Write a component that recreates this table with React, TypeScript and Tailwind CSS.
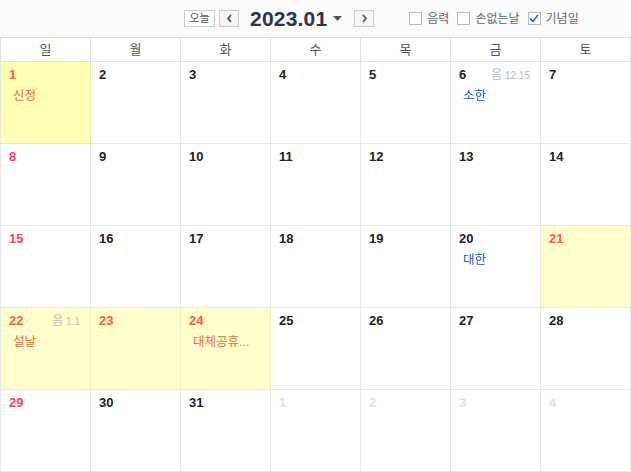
import React from 'react';

type Cell = {
  day: number;
  other?: boolean;
  red?: boolean;
  yellow?: boolean;
  today?: boolean;
  lunar?: string;
  label?: string;
  labelColor?: string;
};

const weekNames = ['일', '월', '화', '수', '목', '금', '토'];

function buildCells(): Cell[] {
  const cells: Cell[] = [];
  for (let d = 1; d <= 31; d++) cells.push({ day: d, red: (d - 1) % 7 === 0 });
  for (let d = 1; d <= 4; d++) cells.push({ day: d, other: true });
  cells[0] = { ...cells[0], red: true, yellow: true, today: true, label: '신정', labelColor: 'text-[#f26b3a]' };
  cells[5] = { ...cells[5], lunar: '12.15', label: '소한', labelColor: 'text-[#2250c8]' };
  cells[19] = { ...cells[19], label: '대한', labelColor: 'text-[#2250c8]' };
  cells[20] = { ...cells[20], red: true, yellow: true };
  cells[21] = { ...cells[21], yellow: true, lunar: '1.1', label: '설날', labelColor: 'text-[#f26b3a]' };
  cells[22] = { ...cells[22], red: true, yellow: true };
  cells[23] = { ...cells[23], red: true, yellow: true, label: '대체공휴...', labelColor: 'text-[#f26b3a]' };
  return cells;
}

function CheckBox({ checked, label }: { checked?: boolean; label: string }) {
  return (
    <label className="flex items-center gap-[5px] text-[12px] text-[#666]">
      <span className="flex h-[13px] w-[13px] items-center justify-center border border-[#bbb] bg-white">
        {checked && (
          <svg width="10" height="9" viewBox="0 0 10 9">
            <path d="M1 4.5 L4 7.5 L9 1" fill="none" stroke="#3b6fc4" strokeWidth="1.8" />
          </svg>
        )}
      </span>
      {label}
    </label>
  );
}

export default function App() {
  const cells = buildCells();

  return (
    <div className="h-[472px] w-[631px] overflow-hidden bg-white font-['Liberation_Sans','Noto_Sans_CJK_KR',sans-serif]">
      {/* Toolbar */}
      <div className="flex h-[38px] items-center border-b border-[#dcdcdc] bg-[#fafafa]">
        <div className="ml-[184px] flex items-center">
          <button className="h-[17px] w-[31px] border border-[#ccc] bg-white text-[11px] leading-[15px] text-[#555]">오늘</button>
          <button className="ml-[4px] flex h-[17px] w-[20px] items-center justify-center border border-[#ccc] bg-[#f5f5f5]">
            <svg width="7" height="9" viewBox="0 0 7 9">
              <path d="M5 1 L2 4.5 L5 8" fill="none" stroke="#555" strokeWidth="1.8" />
            </svg>
          </button>
          <span className="ml-[11px] text-[21px] font-bold tracking-[0.2px] text-[#2e3349]">2023.01</span>
          <svg className="ml-[6px]" width="9" height="5" viewBox="0 0 9 5">
            <path d="M0 0 L9 0 L4.5 5 Z" fill="#555" />
          </svg>
          <button className="ml-[12px] flex h-[17px] w-[20px] items-center justify-center border border-[#ccc] bg-[#f5f5f5]">
            <svg width="7" height="9" viewBox="0 0 7 9">
              <path d="M2 1 L5 4.5 L2 8" fill="none" stroke="#555" strokeWidth="1.8" />
            </svg>
          </button>
        </div>
        <div className="ml-[35px] flex items-center gap-[8px]">
          <CheckBox label="음력" />
          <CheckBox label="손없는날" />
          <CheckBox checked label="기념일" />
        </div>
      </div>

      {/* Week names */}
      <div className="grid h-[24px] grid-cols-7 border-b border-l border-[#e3e3e3]">
        {weekNames.map((w) => (
          <div key={w} className="flex items-center justify-center border-r border-[#e3e3e3] text-[13px] text-[#555]">
            {w}
          </div>
        ))}
      </div>

      {/* Days */}
      <div className="grid grid-cols-7 border-l border-[#e8e8e8]">
        {cells.map((c, i) => (
          <div
            key={i}
            className={`relative h-[82px] border-b border-r px-[8px] pt-[3px] ${
              c.today ? 'bg-[#ffffb3] border-[#eaeaa8]' : c.yellow ? 'bg-[#ffffcc] border-[#efefc8]' : 'bg-white border-[#e8e8e8]'
            }`}
          >
            <div className="flex items-baseline justify-between">
              <span
                className={`text-[13px] font-bold ${
                  c.other ? 'text-[#e2e2e2]' : c.yellow ? 'text-[#ff5a3c]' : c.red ? 'text-[#ff3f4f]' : 'text-[#222]'
                }`}
              >
                {c.day}
              </span>
              {c.lunar && (
                <span className="mr-[2px] text-[10px] text-[#bbb]">
                  <span className="text-[12px]">음</span> {c.lunar}
                </span>
              )}
            </div>
            {c.label && <div className={`ml-[4px] mt-[2px] text-[12.5px] ${c.labelColor}`}>{c.label}</div>}
          </div>
        ))}
      </div>
    </div>
  );
}
